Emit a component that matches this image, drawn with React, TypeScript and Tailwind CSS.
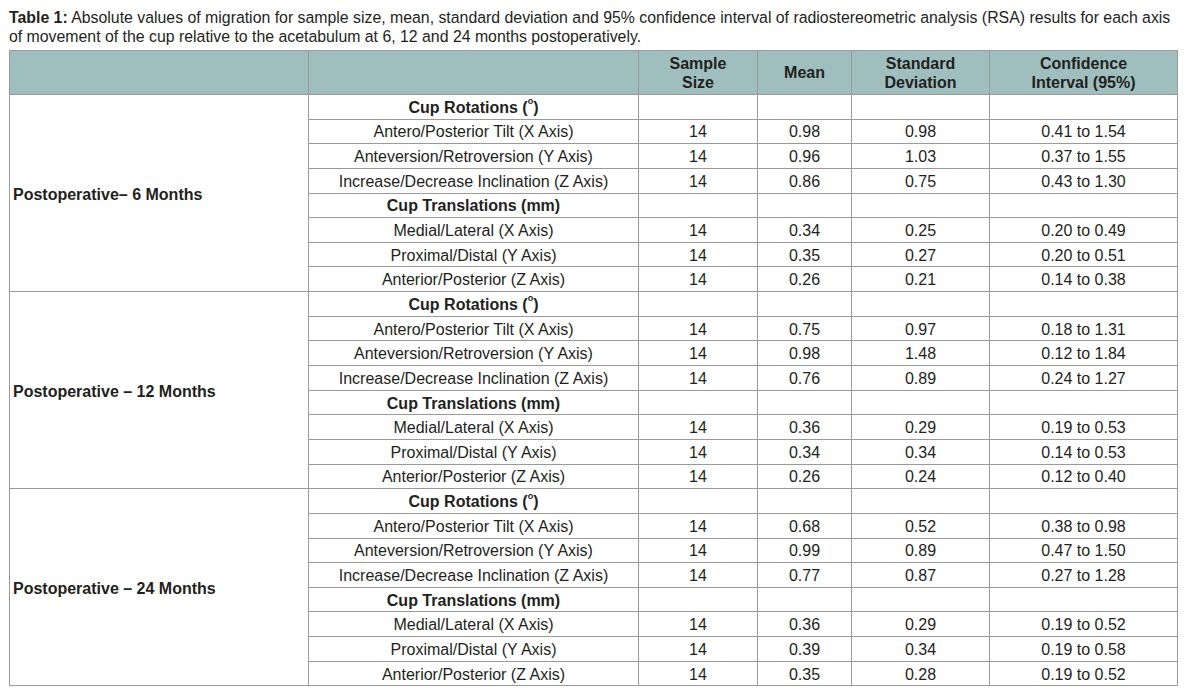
const groups = [
  {
    label: "Postoperative– 6 Months",
    rot: [
      ["Antero/Posterior Tilt (X Axis)", "14", "0.98", "0.98", "0.41 to 1.54"],
      ["Anteversion/Retroversion (Y Axis)", "14", "0.96", "1.03", "0.37 to 1.55"],
      ["Increase/Decrease Inclination (Z Axis)", "14", "0.86", "0.75", "0.43 to 1.30"],
    ],
    tr: [
      ["Medial/Lateral (X Axis)", "14", "0.34", "0.25", "0.20 to 0.49"],
      ["Proximal/Distal (Y Axis)", "14", "0.35", "0.27", "0.20 to 0.51"],
      ["Anterior/Posterior (Z Axis)", "14", "0.26", "0.21", "0.14 to 0.38"],
    ],
  },
  {
    label: "Postoperative – 12 Months",
    rot: [
      ["Antero/Posterior Tilt (X Axis)", "14", "0.75", "0.97", "0.18 to 1.31"],
      ["Anteversion/Retroversion (Y Axis)", "14", "0.98", "1.48", "0.12 to 1.84"],
      ["Increase/Decrease Inclination (Z Axis)", "14", "0.76", "0.89", "0.24 to 1.27"],
    ],
    tr: [
      ["Medial/Lateral (X Axis)", "14", "0.36", "0.29", "0.19 to 0.53"],
      ["Proximal/Distal (Y Axis)", "14", "0.34", "0.34", "0.14 to 0.53"],
      ["Anterior/Posterior (Z Axis)", "14", "0.26", "0.24", "0.12 to 0.40"],
    ],
  },
  {
    label: "Postoperative – 24 Months",
    rot: [
      ["Antero/Posterior Tilt (X Axis)", "14", "0.68", "0.52", "0.38 to 0.98"],
      ["Anteversion/Retroversion (Y Axis)", "14", "0.99", "0.89", "0.47 to 1.50"],
      ["Increase/Decrease Inclination (Z Axis)", "14", "0.77", "0.87", "0.27 to 1.28"],
    ],
    tr: [
      ["Medial/Lateral (X Axis)", "14", "0.36", "0.29", "0.19 to 0.52"],
      ["Proximal/Distal (Y Axis)", "14", "0.39", "0.34", "0.19 to 0.58"],
      ["Anterior/Posterior (Z Axis)", "14", "0.35", "0.28", "0.19 to 0.52"],
    ],
  },
];

const cell = "border border-[#9a9a9a] text-center p-0 pt-[2px] leading-none";
const head = "border border-[#9a9a9a] text-center p-0 leading-[19px]";

function Heading({ text }: { text: React.ReactNode }) {
  return (
    <tr className="h-[24.65px]">
      <td className={cell + " font-bold"}>{text}</td>
      <td className={cell}></td>
      <td className={cell}></td>
      <td className={cell}></td>
      <td className={cell}></td>
    </tr>
  );
}

function DataRow({ row }: { row: string[] }) {
  return (
    <tr className="h-[24.65px]">
      {row.map((v, i) => (
        <td key={i} className={cell}>
          {v}
        </td>
      ))}
    </tr>
  );
}

export default function App() {
  return (
    <div className="min-h-screen bg-white text-[#231f20] font-['Liberation_Sans',Arial,sans-serif] pl-[9px] pt-[8px]">
      <p className="text-[15.85px] leading-[19px] w-[1178px]">
        <span className="font-bold">Table 1:</span> Absolute values of migration for sample size, mean, standard
        deviation and 95% confidence interval of radiostereometric analysis (RSA) results for each axis of movement
        of the cup relative to the acetabulum at 6, 12 and 24 months postoperatively.
      </p>
      <table className="mt-[4px] w-[1168px] border-collapse table-fixed text-[16px]">
        <colgroup>
          <col className="w-[299px]" />
          <col className="w-[330px]" />
          <col className="w-[119px]" />
          <col className="w-[94px]" />
          <col className="w-[138px]" />
          <col className="w-[188px]" />
        </colgroup>
        <thead>
          <tr className="h-[44px] bg-[#9fbfbe] font-bold">
            <th className={head}></th>
            <th className={head}></th>
            <th className={head}>
              Sample
              <br />
              Size
            </th>
            <th className={head}>Mean</th>
            <th className={head}>
              Standard
              <br />
              Deviation
            </th>
            <th className={head}>
              Confidence
              <br />
              Interval (95%)
            </th>
          </tr>
        </thead>
        {groups.map((g) => (
          <tbody key={g.label}>
            <tr className="h-[24.65px]">
              <td rowSpan={8} className="border border-[#9a9a9a] text-left font-bold pl-[3px] pt-[3px]">
                {g.label}
              </td>
              <td className={cell + " font-bold"}>
                Cup Rotations (<sup className="text-[9px] align-[4px]">o</sup>)
              </td>
              <td className={cell}></td>
              <td className={cell}></td>
              <td className={cell}></td>
              <td className={cell}></td>
            </tr>
            {g.rot.map((r) => (
              <DataRow key={r[0]} row={r} />
            ))}
            <Heading text="Cup Translations (mm)" />
            {g.tr.map((r) => (
              <DataRow key={r[0]} row={r} />
            ))}
          </tbody>
        ))}
      </table>
    </div>
  );
}
